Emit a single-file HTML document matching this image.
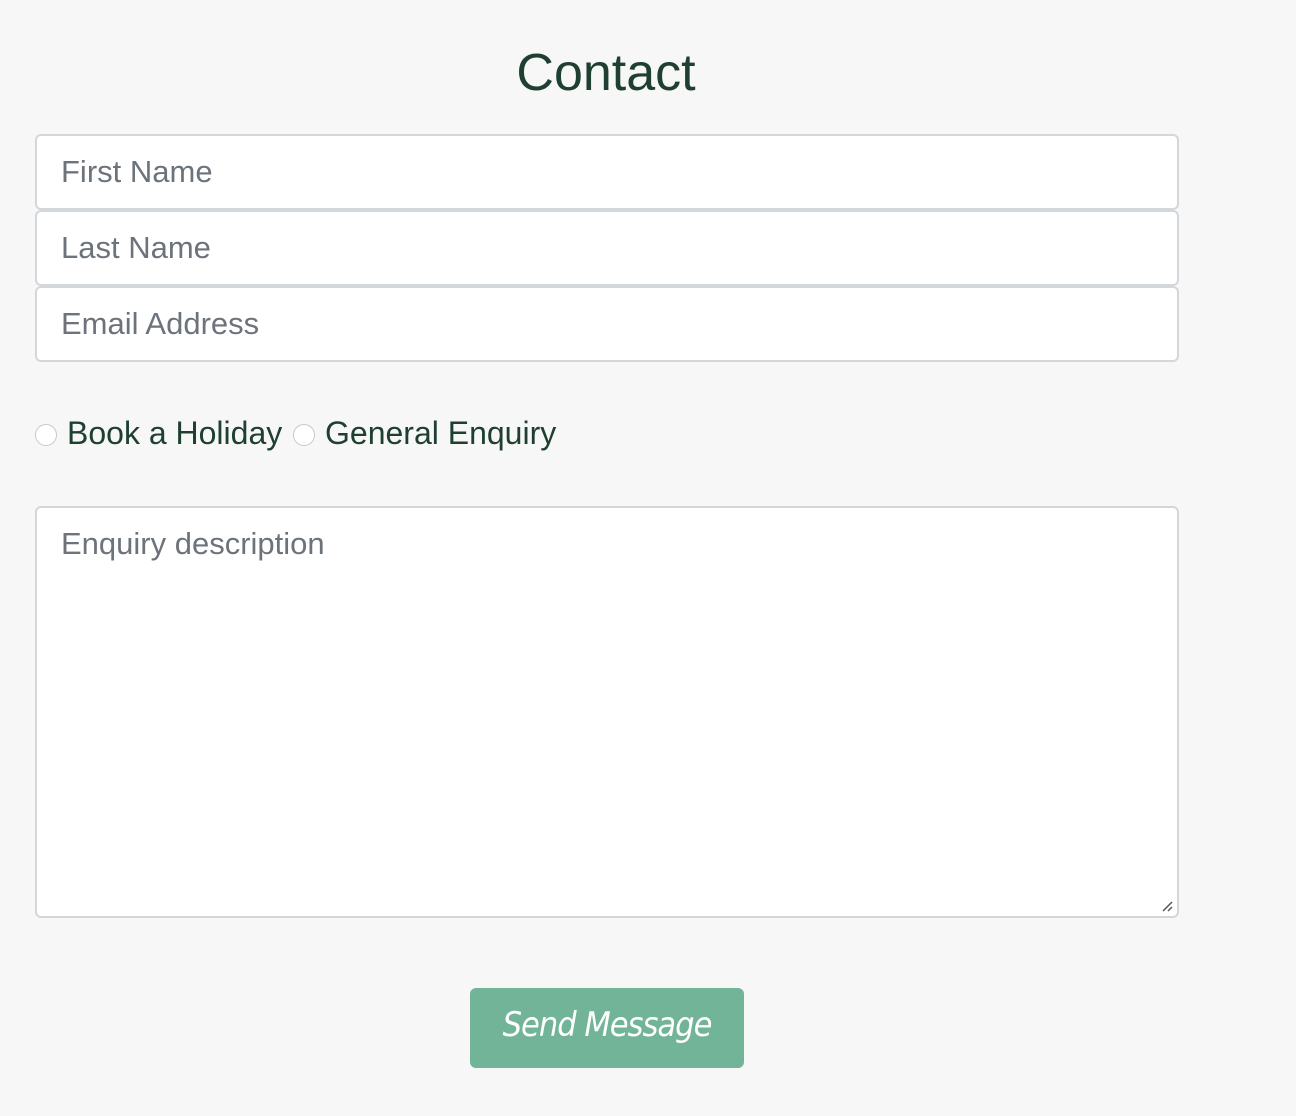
<!DOCTYPE html>
<html><head><style>
body{margin:0;background:#f7f7f7;width:1296px;height:1116px;font-family:"Liberation Sans",sans-serif;position:relative;overflow:hidden}
h1{position:absolute;left:0;width:1212px;top:43px;margin:0;text-align:center;font-weight:400;font-size:52px;color:#1f4030;line-height:60px}
.in{position:absolute;left:35px;width:1144px;background:#fff;border:2px solid #d3d7db;border-radius:6px;box-sizing:border-box;font-size:31px;color:#6c737b;padding-left:24px}
.r{position:absolute;top:424px;width:22px;height:22px;border:1px solid #c8c8c8;border-radius:50%;background:#fff;box-sizing:border-box}
.lab{position:absolute;top:413px;font-size:32px;color:#1f4030;line-height:40px}
.btn{position:absolute;left:470px;top:988px;width:274px;height:80px;background:#71b498;border-radius:6px;color:#fff;font-family:"DejaVu Sans Condensed","DejaVu Sans",sans-serif;font-style:italic;font-size:34px;text-align:center;line-height:74px;letter-spacing:-1px}
</style></head><body>
<h1>Contact</h1>
<div class="in" style="top:134px;height:76px;line-height:72px">First Name</div>
<div class="in" style="top:210px;height:76px;line-height:72px">Last Name</div>
<div class="in" style="top:286px;height:76px;line-height:72px">Email Address</div>
<div class="r" style="left:35px"></div><div class="lab" style="left:67px">Book a Holiday</div>
<div class="r" style="left:293px"></div><div class="lab" style="left:325px">General Enquiry</div>
<div class="in" style="top:506px;height:412px;line-height:72px;">Enquiry description
<svg style="position:absolute;right:4px;bottom:4px" width="12" height="12"><path d="M2 11L11 2M7 11L11 7" stroke="#555" stroke-width="1.5"/></svg></div>
<div class="btn">Send Message</div>
</body></html>
